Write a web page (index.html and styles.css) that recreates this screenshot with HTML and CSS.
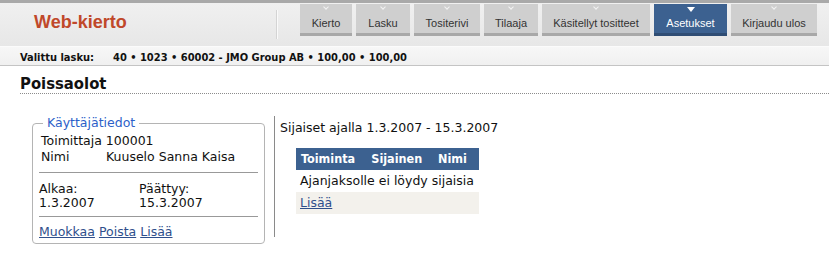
FILE: index.html
```html
<!DOCTYPE html>
<html>
<head>
<meta charset="utf-8">
<link rel="stylesheet" href="styles.css">
</head>
<body>
<div class="header">
  <div class="brand">Web-kierto</div>
  <div class="sep"></div>
  <ul class="nav">
    <li class="tab t1"><span class="chev"></span>Kierto</li>
    <li class="tab t2"><span class="chev"></span>Lasku</li>
    <li class="tab t3"><span class="chev"></span>Tositerivi</li>
    <li class="tab t4"><span class="chev"></span>Tilaaja</li>
    <li class="tab t5"><span class="chev"></span>Käsitellyt tositteet</li>
    <li class="tab t6 active"><span class="tri"></span>Asetukset</li>
    <li class="tab t7"><span class="chev"></span>Kirjaudu ulos</li>
  </ul>
</div>
<div class="infobar">
  <span class="label">Valittu lasku:</span>
  <span class="value">40 • 1023 • 60002 - JMO Group AB • 100,00 • 100,00</span>
</div>
<h1 class="title">Poissaolot</h1>
<div class="main">
  <div class="left">
    <fieldset class="box">
      <legend>Käyttäjätiedot</legend>
      <div class="line first">Toimittaja 100001</div>
      <div class="line name"><span class="nlabel">Nimi</span><span>Kuuselo Sanna Kaisa</span></div>
      <hr class="hr1">
      <div class="dates">
        <div class="dcol"><div>Alkaa:</div><div>1.3.2007</div></div>
        <div class="dcol"><div>Päättyy:</div><div>15.3.2007</div></div>
      </div>
      <hr class="hr2">
      <div class="links"><a href="#">Muokkaa</a> <a href="#">Poista</a> <a href="#">Lisää</a></div>
    </fieldset>
  </div>
  <div class="right">
    <div class="period">Sijaiset ajalla 1.3.2007 - 15.3.2007</div>
    <table class="subs">
      <thead><tr><th class="c1">Toiminta</th><th class="c2">Sijainen</th><th class="c3">Nimi</th></tr></thead>
      <tbody>
        <tr><td colspan="3">Ajanjaksolle ei löydy sijaisia</td></tr>
        <tr class="alt"><td colspan="3"><a href="#">Lisää</a></td></tr>
      </tbody>
    </table>
  </div>
</div>
</body>
</html>
```
FILE: styles.css
```css
html, body { margin: 0; padding: 0; background: #fff; }
body { font-family: "DejaVu Sans", Verdana, sans-serif; color: #111; width: 829px; overflow: hidden; }

.header {
  height: 43px;
  border-top: 3px solid #a9a9a9;
  background: linear-gradient(#f0f0f0, #e7e7e7);
  display: flex;
  align-items: flex-start;
}
.brand {
  font-family: "Liberation Sans", Arial, sans-serif;
  font-weight: bold;
  font-size: 18px;
  line-height: 20px;
  color: #c0482a;
  width: 242px;
  padding: 9px 0 0 34px;
}
.sep {
  width: 1px;
  height: 29px;
  margin-top: 7px;
  background: #d4d4d4;
  box-shadow: 1px 0 0 #fafafa;
}
.nav {
  list-style: none;
  margin: 1px 0 0 23px;
  padding: 0;
  display: flex;
  gap: 4px;
}
.tab {
  position: relative;
  height: 17px;
  padding-top: 12px;
  border-bottom: 3px solid #a8a8a8;
  background: #cfcfcf;
  font-family: "Liberation Sans", Arial, sans-serif;
  font-size: 11px;
  line-height: 14px;
  color: #333;
  text-align: center;
}
.t1 { width: 52px; }
.t2 { width: 54px; }
.t3 { width: 66px; }
.t4 { width: 54px; }
.t5 { width: 108px; }
.t6 { width: 73px; }
.t7 { width: 86px; }
.tab.active { background: #3c6190; border-bottom-color: #2f4d74; color: #fff; }
.chev {
  position: absolute;
  left: 50%;
  top: 1px;
  width: 3px;
  height: 3px;
  margin-left: -2px;
  border-right: 1.5px solid #f4f4f4;
  border-bottom: 1.5px solid #f4f4f4;
  transform: rotate(45deg);
}
.tri {
  position: absolute;
  left: 50%;
  top: 3px;
  margin-left: -4px;
  border-left: 4px solid transparent;
  border-right: 4px solid transparent;
  border-top: 5px solid #fff;
}

.infobar {
  height: 14px;
  padding: 4px 0 0 20px;
  background: linear-gradient(#f7f7f7, #f0f0f0);
  border-top: 1px solid #fbfbfb;
  border-bottom: 1px solid #c4c4c4;
  font-family: "DejaVu Sans Condensed", "DejaVu Sans", sans-serif;
  font-size: 11px;
  font-weight: bold;
  line-height: 14px;
  display: flex;
}
.infobar .label { width: 93px; }

.title {
  margin: 10px 0 0 20px;
  font-family: "DejaVu Sans Condensed", "DejaVu Sans", sans-serif;
  font-size: 16.5px;
  font-weight: bold;
  line-height: 16px;
  padding-bottom: 1px;
  border-bottom: 1px dotted #8c8c8c;
}

.main { display: flex; margin-top: 22px; font-size: 12.5px; }
.left { width: 242px; padding-left: 32px; padding-top: 0; }
.box {
  margin: 0;
  padding: 3px 6px 3px 6px;
  width: 219px;
  border: 1px solid #b4b4b4;
  border-radius: 4px;
  line-height: 16px;
}
.box legend {
  color: #2c5fc9;
  padding: 0 4px;
  margin-left: 4px;
  line-height: 14px;
}
.line { padding-left: 2px; }
.name { display: flex; }
.nlabel { width: 65px; }
.box hr { border: 0; border-top: 1px solid #999; margin: 0; height: 0; }
.hr1 { margin-top: 7px !important; }
.dates { display: flex; margin-top: 9px; line-height: 14px; }
.dcol { width: 100px; }
.hr2 { margin-top: 6px !important; }
.links { margin-top: 7px; }
.links a, .subs a { color: #2f4f8c; }

.right {
  border-left: 1px solid #8a8a8a;
  padding: 4px 0 0 5px;
  height: 117px;
}
.period { line-height: 16px; }
.subs {
  margin: 12px 0 0 16px;
  border-collapse: collapse;
  width: 183px;
}
.subs th {
  background: #3c6190;
  color: #fff;
  font-family: "DejaVu Sans Condensed", "DejaVu Sans", sans-serif;
  font-weight: bold;
  text-align: left;
  padding: 3px 5px 3px 5px;
  line-height: 16px;
}
.subs th.c3 { padding-right: 8px; }
.subs td { padding: 3px 4px; line-height: 16px; }
.subs tr.alt td { background: #f3f1ec; }
```
